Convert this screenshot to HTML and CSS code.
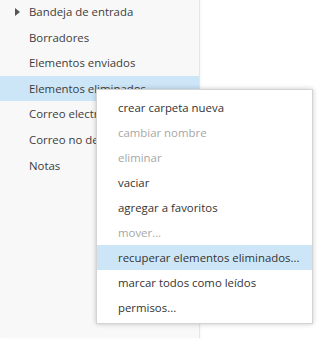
FILE: index.html
```html
<!DOCTYPE html>
<html lang="es">
<head>
<meta charset="utf-8">
<link rel="stylesheet" href="styles.css">
</head>
<body>
<div class="page">
  <nav class="folders">
    <div class="folder"><span class="caret"></span>Bandeja de entrada</div>
    <div class="folder">Borradores</div>
    <div class="folder">Elementos enviados</div>
    <div class="folder selected">Elementos eliminados</div>
    <div class="folder">Correo electrónico no deseado</div>
    <div class="folder">Correo no deseado</div>
    <div class="folder">Notas</div>
  </nav>
  <div class="main"></div>
  <ul class="menu">
    <li class="item">crear carpeta nueva</li>
    <li class="item disabled">cambiar nombre</li>
    <li class="item disabled">eliminar</li>
    <li class="item">vaciar</li>
    <li class="item">agregar a favoritos</li>
    <li class="item disabled">mover...</li>
    <li class="item hover">recuperar elementos eliminados...</li>
    <li class="item">marcar todos como leídos</li>
    <li class="item">permisos...</li>
  </ul>
</div>
</body>
</html>
```
FILE: styles.css
```css
html, body {
  margin: 0;
  padding: 0;
  background: #ffffff;
}
body {
  font-family: "Open Sans", "Liberation Sans", sans-serif;
  font-size: 11.4px;
  color: #333333;
}
.page {
  position: relative;
  display: flex;
  width: 333px;
  height: 339px;
  overflow: hidden;
}
.folders {
  width: 199px;
  height: 339px;
  background: #f8f8f8;
  border-right: 1px solid #e6e6e6;
  box-shadow: 1px 0 2px rgba(0,0,0,0.04);
  margin-top: -1px;
}
.folder {
  position: relative;
  height: 25.6px;
  line-height: 25.6px;
  padding-left: 29px;
  white-space: nowrap;
  overflow: hidden;
  color: #3c3c3c;
}
.folder.selected {
  background: #cde6f7;
}
.caret {
  position: absolute;
  left: 15px;
  top: 9px;
  width: 0;
  height: 0;
  border-top: 4px solid transparent;
  border-bottom: 4px solid transparent;
  border-left: 5px solid #555555;
}
.main {
  flex: 1;
}
.menu {
  position: absolute;
  left: 96px;
  top: 89px;
  width: 215px;
  margin: 0;
  padding: 5px 0 3px;
  list-style: none;
  background: #ffffff;
  border: 1px solid #d4d4d4;
  box-shadow: 0 0 5px rgba(0,0,0,0.22);
}
.item {
  height: 25px;
  line-height: 25px;
  padding-left: 21px;
  white-space: nowrap;
  color: #333333;
}
.item.disabled {
  color: #a6a6a6;
}
.item.hover {
  background: #cde6f7;
}
```
